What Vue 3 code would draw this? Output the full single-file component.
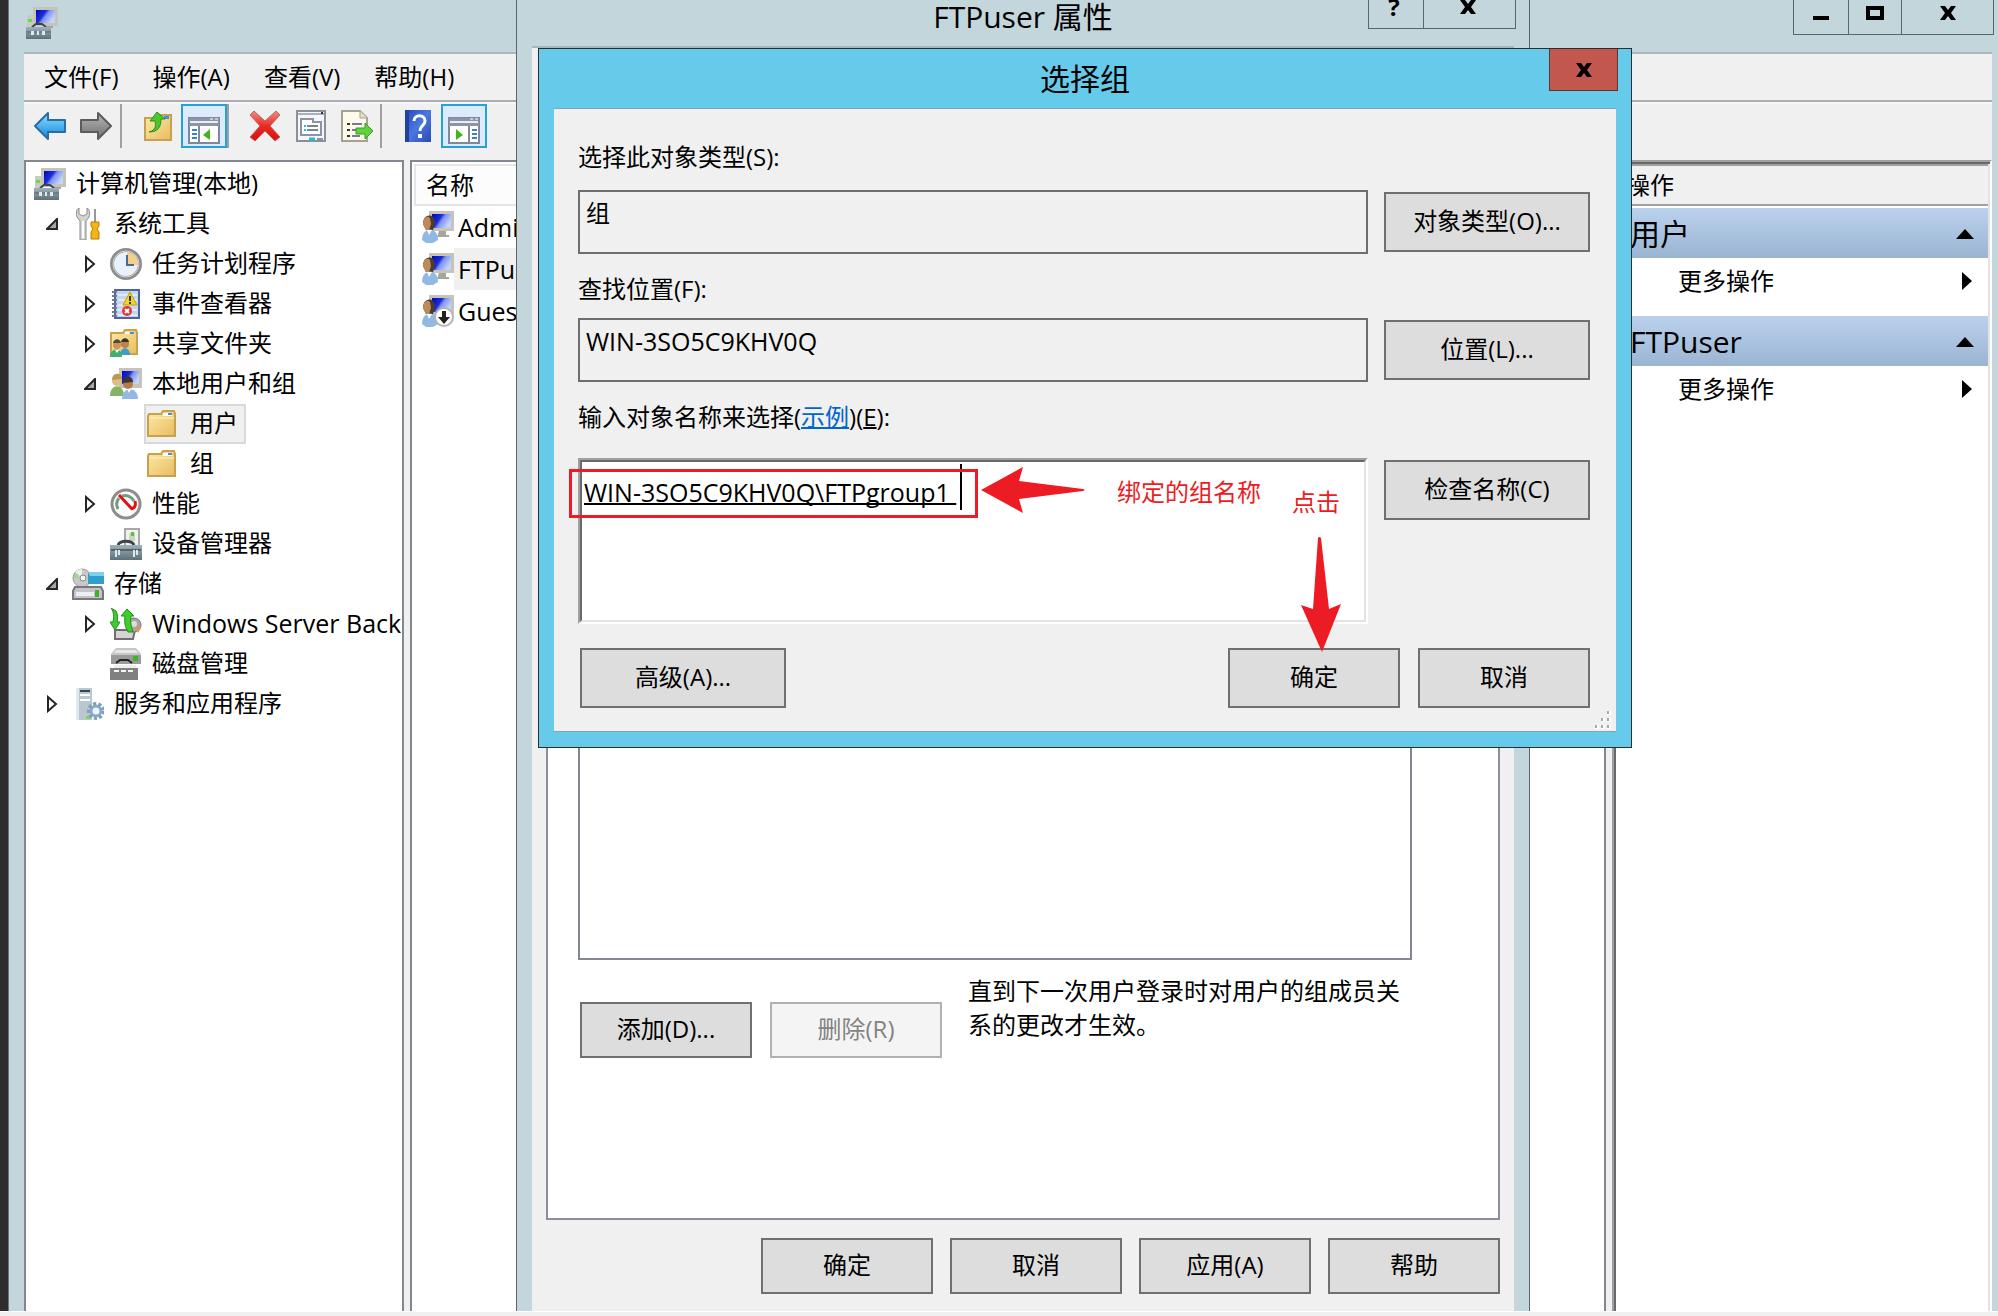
<script setup>
import { ref } from 'vue'

const menus = ['文件(F)', '操作(A)', '查看(V)', '帮助(H)']

const tree = [
  { level: 0, icon: 'computer', text: '计算机管理(本地)' },
  { level: 1, icon: 'tools', text: '系统工具', state: 'open' },
  { level: 2, icon: 'clock', text: '任务计划程序', state: 'closed' },
  { level: 2, icon: 'events', text: '事件查看器', state: 'closed' },
  { level: 2, icon: 'shared', text: '共享文件夹', state: 'closed' },
  { level: 2, icon: 'usersgroups', text: '本地用户和组', state: 'open' },
  { level: 3, icon: 'folder', text: '用户', selected: true },
  { level: 3, icon: 'folder', text: '组' },
  { level: 2, icon: 'gauge', text: '性能', state: 'closed' },
  { level: 2, icon: 'device', text: '设备管理器' },
  { level: 1, icon: 'storage', text: '存储', state: 'open' },
  { level: 2, icon: 'backup', text: 'Windows Server Back', state: 'closed', latin: true },
  { level: 2, icon: 'disk', text: '磁盘管理' },
  { level: 1, icon: 'services', text: '服务和应用程序', state: 'closed' },
]

const users = [
  { icon: 'user', name: 'Administrator' },
  { icon: 'user', name: 'FTPuser', selected: true },
  { icon: 'guest', name: 'Guest' },
]

const actionGroups = ['用户', 'FTPuser']
const objectType = ref('组')
const location = ref('WIN-3SO5C9KHV0Q')
const names = ref('WIN-3SO5C9KHV0Q\\FTPgroup1 ')
</script>

<template>
  <div class="page">
    <svg class="sprite" aria-hidden="true">
      <defs>
        <linearGradient id="gScreen" x1="0" y1="0" x2="1" y2="0.5">
          <stop offset="0" stop-color="#0009b8" /><stop offset="0.45" stop-color="#1c2cd4" /><stop offset="0.6" stop-color="#7f92f2" /><stop offset="1" stop-color="#c3d4fb" />
        </linearGradient>
        <linearGradient id="gFolder" x1="0" y1="0" x2="1" y2="1">
          <stop offset="0" stop-color="#fdeaa8" /><stop offset="1" stop-color="#e8bd60" />
        </linearGradient>
        <linearGradient id="gSlate" x1="0" y1="0" x2="0" y2="1">
          <stop offset="0" stop-color="#9fb0ba" /><stop offset="1" stop-color="#5d6f79" />
        </linearGradient>
        <linearGradient id="gBlue" x1="0" y1="0" x2="0" y2="1">
          <stop offset="0" stop-color="#8fe0ff" /><stop offset="1" stop-color="#0f86dc" />
        </linearGradient>
        <linearGradient id="gGray" x1="0" y1="0" x2="0" y2="1">
          <stop offset="0" stop-color="#b8b8b8" /><stop offset="1" stop-color="#6f6f6f" />
        </linearGradient>
        <linearGradient id="gRed" x1="0" y1="0" x2="0" y2="1">
          <stop offset="0" stop-color="#f48a80" /><stop offset="0.5" stop-color="#ea2b22" /><stop offset="1" stop-color="#e00b0b" />
        </linearGradient>
        <linearGradient id="gHelp" x1="0" y1="0" x2="1" y2="1">
          <stop offset="0" stop-color="#2a49b4" /><stop offset="0.5" stop-color="#4a78e0" /><stop offset="1" stop-color="#2a49b4" />
        </linearGradient>
      </defs>

      <symbol id="computer" viewBox="0 0 32 32">
        <rect x="1" y="8" width="8" height="14" fill="#c9cbc9" /><rect x="2" y="12" width="4" height="3" fill="#5fe03a" />
        <path d="M7 0h25v19H7z" fill="#c7c3b8" /><path d="M10 3h19v13H10z" fill="url(#gScreen)" />
        <path d="M18 19h9v2h-9z" fill="#a6a49c" />
        <path d="M6 20l4-3h6l4 3" fill="none" stroke="#3a464c" stroke-width="2" />
        <rect y="20" width="25" height="12" fill="url(#gSlate)" /><path d="M0 24h25v2H0z" fill="#6b7d87" />
        <path d="M5 24h3v4H5zM11 24h2v4h-2zM16 24h3v4h-3z" fill="#dfe8ec" />
      </symbol>
      <symbol id="tools" viewBox="-4 0 32 32">
        <path d="M3 0v6l4 2 4-2V0c3 1 3 6 2 9l-3 4v19H4V13L1 9C0 6 0 1 3 0z" fill="#d4d4d4" stroke="#8b8b8b" />
        <path d="M7 13v17" stroke="#fff" stroke-width="2" />
        <path d="M18 1h2v13h-2z" fill="#999" /><path d="M15 14h8v4l-2 3 2 3v7h-8v-7l2-3-2-3z" fill="#f3b414" stroke="#b87a0a" />
      </symbol>
      <symbol id="clock" viewBox="0 0 32 32">
        <circle cx="16" cy="16" r="14" fill="#e9f1fa" stroke="#8d8d8d" stroke-width="4" /><circle cx="16" cy="16" r="13" fill="none" stroke="#d6d6d6" stroke-width="1" />
        <path d="M17 17V4a12 12 0 0 1 11 13z" fill="#f5cf8d" /><path d="M17 7v10h7" fill="none" stroke="#4a6a90" stroke-width="2" />
      </symbol>
      <symbol id="events" viewBox="0 0 32 32">
        <path d="M5 2h24v28H5z" fill="#c5d5ee" stroke="#4d64a4" stroke-width="2" />
        <path d="M8 7h19M8 12h19M8 17h19M8 22h19M8 27h19" stroke="#fff" />
        <path d="M2 4h5M2 8h5M2 12h5M2 16h5M2 20h5M2 24h5M2 28h5" stroke="#747b88" stroke-width="2" />
        <path d="M20 4l7 13H13z" fill="#f2d51e" stroke="#c29c10" /><path d="M19 8h2v5h-2zM19 14h2v2h-2z" fill="#333" />
        <circle cx="17" cy="23" r="5" fill="#e23636" /><path d="M15 21l4 4M19 21l-4 4" stroke="#fff" stroke-width="2" />
      </symbol>
      <symbol id="folder" viewBox="0 0 32 32">
        <path d="M3 6h12l2-3h11l1 3v22H2V8z" fill="url(#gFolder)" stroke="#c9a04d" stroke-width="2" />
        <path d="M17 5h9v3h-9z" fill="#fff" /><path d="M22 5h4v2h-4z" fill="#3b93e0" />
        <path d="M4 10h24" stroke="#fff3c4" />
      </symbol>
      <symbol id="shared" viewBox="0 0 32 32">
        <path d="M1 5h12l2-3h11l1 3v21H1z" fill="url(#gFolder)" stroke="#c9a04d" stroke-width="2" /><path d="M15 4h4v2h-4z" fill="#fff" /><path d="M20 4h4v2h-4z" fill="#3b93e0" />
        <circle cx="7" cy="17" r="4" fill="#c99460" /><path d="M3 15c1-5 7-5 8 0z" fill="#5c4630" />
        <circle cx="15" cy="16" r="4" fill="#b9824f" /><path d="M11 14c1-5 7-5 8 0z" fill="#3a302a" />
        <path d="M10 27c0-9 10-9 10 0z" fill="#3f9dc8" /><path d="M0 29c0-10 12-10 12 0z" fill="#3fae72" />
        <path d="M5 22l2 3 2-3z" fill="#fff" />
      </symbol>
      <symbol id="usersgroups" viewBox="0 0 32 32">
        <path d="M9 0h23v20H9z" fill="#c7c3b8" /><path d="M12 3h17v13H12z" fill="url(#gScreen)" />
        <circle cx="7" cy="13" r="5" fill="#e0bd84" /><path d="M2 12c0-8 10-8 10-1z" fill="#b89b50" /><path d="M0 28c0-13 14-13 14 0z" fill="#84b464" />
        <circle cx="18" cy="16" r="5" fill="#b57c4b" /><path d="M13 15c0-9 10-8 10-1z" fill="#3f352f" />
        <path d="M12 31c0-13 16-13 16 0z" fill="#92b9e4" /><path d="M17 21l2 4 2-4z" fill="#fff" />
      </symbol>
      <symbol id="gauge" viewBox="0 0 32 32">
        <circle cx="16" cy="16" r="14" fill="#fbfbfb" stroke="#8d8d8d" stroke-width="3" />
        <path d="M8 21a10 10 0 0 1 1-11M12 8a10 10 0 0 1 12 5" fill="none" stroke="#6f9c86" stroke-width="3" />
        <path d="M9 7l13 14M25 13c1 4 0 7-4 8" fill="none" stroke="#e01414" stroke-width="3" />
      </symbol>
      <symbol id="device" viewBox="0 0 32 32">
        <path d="M15 1h14v17H15z" fill="#f2f2f2" stroke="#a8a8a8" stroke-width="2" /><path d="M19 5h6v8h-6z" fill="#c8d6c4" /><path d="M21 4h3v4h-3z" fill="#64bf2e" />
        <path d="M8 17c2-5 14-5 16 0" fill="none" stroke="#3a464c" stroke-width="3" />
        <path d="M0 17h32v15H0z" fill="url(#gSlate)" /><path d="M1 22h30" stroke="#52636c" stroke-width="2" />
        <path d="M6 22v7M9 22v5M24 22v7M27 22v5" stroke="#dfe8ec" stroke-width="2" />
      </symbol>
      <symbol id="storage" viewBox="0 0 32 32">
        <circle cx="10" cy="10" r="9" fill="#c9c9c9" stroke="#999" /><path d="M10 10L3 4a9 9 0 0 1 7-3z" fill="#efefef" /><circle cx="11" cy="10" r="3" fill="#f6f6f6" stroke="#888" /><path d="M2 6h4v4H2z" fill="#9ed884" />
        <path d="M16 4h16v12H16z" fill="#2f9fd0" /><path d="M16 4h16v4H18z" fill="#7fd0ee" />
        <path d="M3 19h26l2 4v8H1v-8z" fill="#c4c4ca" stroke="#77777c" stroke-width="2" /><path d="M4 24h18v4H4z" fill="#eeeef6" /><path d="M23 22h4v7h-4z" fill="#3db421" />
      </symbol>
      <symbol id="backup" viewBox="0 0 32 32">
        <path d="M5 22h20l-2 9H5z" fill="#d4d4d4" stroke="#6f6f6f" stroke-width="2" />
        <circle cx="24" cy="17" r="7" fill="#a6a6a6" stroke="#777" /><path d="M25 17l6 3-3 5z" fill="#e88d5c" /><circle cx="24" cy="16" r="3" fill="#ddd" />
        <path d="M1 0l5 3c2 4 2 8 1 11h3l-5 8-5-8h3C4 9 4 4 1 0z" fill="#3bcf2c" stroke="#2a8a22" />
        <path d="M17 1l7 7h-3c-1 6 0 10 2 16h-5c-3-5-4-10-3-16h-4z" fill="#3bcf2c" stroke="#2a8a22" />
      </symbol>
      <symbol id="disk" viewBox="0 0 32 32">
        <path d="M6 0h20l5 6v10H1V6z" fill="#c6c6c6" /><path d="M1 7h30v9H1z" fill="#9a9a9a" /><path d="M6 2h20l2 3H4z" fill="#e6e6e6" />
        <path d="M23 8h5v5h-5z" fill="#3db421" /><path d="M6 15l4-3h8l4 3" fill="none" stroke="#20242c" stroke-width="2" />
        <path d="M4 17h22v3H4z" fill="#eee" /><path d="M0 20h28v12H0z" fill="#808080" /><path d="M4 23h20" stroke="#f4f4f4" stroke-width="2" stroke-dasharray="5 2" />
      </symbol>
      <symbol id="services" viewBox="0 0 32 32">
        <path d="M4 0h16v32H4z" fill="#b9c8d0" /><path d="M4 0h3v32H4z" fill="#dfe9ee" /><path d="M8 2h10v2H8z" fill="#33454d" /><path d="M8 7h10M8 12h10" stroke="#fff" stroke-width="2" /><path d="M14 28h4v3h-4z" fill="#7cd84c" />
        <circle cx="24" cy="23" r="7" fill="none" stroke="#7f9dbd" stroke-width="4" stroke-dasharray="3 2" /><circle cx="24" cy="23" r="5" fill="#eef4fa" stroke="#89a8c8" stroke-width="3" />
      </symbol>
      <symbol id="user" viewBox="0 0 32 32">
        <path d="M7 0h25v20H7z" fill="#c7c3b8" /><path d="M10 3h19v14H10z" fill="url(#gScreen)" /><path d="M17 20h7v4h3v2H15z" fill="#a6a49c" />
        <path d="M1 13C1 2 13 2 13 12l-2 7H4z" fill="#4a3c30" /><path d="M1 13c0-7 5-9 7-6l1 6-2 6H4z" fill="#c08a56" />
        <path d="M0 29c0-14 16-14 16 0l-5 3H4z" fill="#92b9e4" /><path d="M5 19l2 5 3-5z" fill="#fff" />
      </symbol>
      <symbol id="guest" viewBox="0 0 32 32">
        <use href="#user" /><circle cx="22" cy="22" r="9" fill="#fff" stroke="#b4b4b4" stroke-width="2" />
        <path d="M20 16h4v6h4l-6 7-6-7h4z" fill="#222" />
      </symbol>

      <symbol id="back" viewBox="0 0 32 32">
        <path d="M1 16L14 3v7h17v12H14v7z" fill="url(#gBlue)" stroke="#2a6ca4" stroke-width="2" stroke-linejoin="round" />
      </symbol>
      <symbol id="forward" viewBox="0 0 32 32">
        <path d="M31 16L18 3v7H1v12h17v7z" fill="url(#gGray)" stroke="#5c5c5c" stroke-width="2" stroke-linejoin="round" />
      </symbol>
      <symbol id="up" viewBox="0 0 32 32">
        <path d="M3 8h12l2-3h12v25H3z" fill="url(#gFolder)" stroke="#c9a04d" stroke-width="2" /><path d="M22 6h5v3h-5z" fill="#3b93e0" />
        <path d="M7 22c7-2 7-6 6-11H8l7-9 8 7h-4c0 8-3 13-12 13z" fill="#4cc62c" stroke="#2c8f1c" />
      </symbol>
      <symbol id="treepane" viewBox="0 0 32 32">
        <path d="M1 6h30v25H1z" fill="#fff" stroke="#81889a" stroke-width="2" /><path d="M1 6h30v8H1z" fill="#8c94a8" /><path d="M2 10h28" stroke="#e9edf5" stroke-width="2" /><path d="M22 7h3M27 7h3" stroke="#fff" />
        <path d="M11 14v17" stroke="#81889a" stroke-width="2" /><path d="M4 18h5M4 22h5M4 26h5" stroke="#3480d2" stroke-width="2" /><path d="M22 17v11l-7-5z" fill="#41b51d" />
      </symbol>
      <symbol id="actionpane" viewBox="0 0 32 32">
        <path d="M1 6h30v25H1z" fill="#fff" stroke="#81889a" stroke-width="2" /><path d="M1 6h30v8H1z" fill="#8c94a8" /><path d="M2 10h28" stroke="#e9edf5" stroke-width="2" /><path d="M22 7h3M27 7h3" stroke="#fff" />
        <path d="M21 14v17" stroke="#81889a" stroke-width="2" /><path d="M24 18h5M24 22h5M24 26h5" stroke="#3480d2" stroke-width="2" /><path d="M8 17v11l7-5z" fill="#41b51d" />
      </symbol>
      <symbol id="delete" viewBox="0 0 32 32">
        <path d="M5 1l11 10L27 1l4 4-10 11 10 11-5 4-10-10L6 31l-5-4 10-11L1 5z" fill="url(#gRed)" stroke="#b46a66" stroke-linejoin="round" />
      </symbol>
      <symbol id="props" viewBox="0 0 32 32">
        <path d="M2 1h28v30H2z" fill="#f4f6fa" stroke="#8a8f9c" stroke-width="2" /><path d="M3 4h26" stroke="#a8b0c0" stroke-width="2" /><path d="M26 2h2v2h-2z" fill="#334" />
        <path d="M6 9h12v3h8v13H6z" fill="#fff" stroke="#8a93a8" stroke-width="2" /><path d="M12 16h11M12 20h11" stroke="#7b8290" stroke-width="2" /><path d="M9 16h2M9 20h2" stroke="#28b8e8" stroke-width="2" />
        <path d="M14 29h6" stroke="#28b8e8" stroke-width="3" /><path d="M22 29h6" stroke="#8a93a8" stroke-width="2" />
      </symbol>
      <symbol id="export" viewBox="0 0 32 32">
        <path d="M1 1h18l7 7v23H1z" fill="#fdfaea" stroke="#a6a293" stroke-width="2" /><path d="M19 1v7h7" fill="#e4e0d0" stroke="#a6a293" />
        <path d="M6 14h3M6 20h3M6 26h3" stroke="#333" stroke-width="2" /><path d="M11 14h10M11 20h6M11 26h8" stroke="#777a9a" stroke-width="2" />
        <path d="M15 18h9v-5l8 8-8 8v-5h-9z" fill="#5fd33a" stroke="#3a9a22" />
      </symbol>
      <symbol id="help" viewBox="0 0 32 32">
        <path d="M3 0h26v32H3z" fill="url(#gHelp)" /><path d="M3 0h4v32H3z" fill="#24409e" />
        <path d="M12 11c0-7 11-7 11 0 0 5-5 4-5 10" fill="none" stroke="#fff" stroke-width="3" /><path d="M16 24h4v4h-4z" fill="#fff" />
      </symbol>
      <symbol id="cross" viewBox="0 0 16 14">
        <path d="M0 0h5l3 4 3-4h5l-5 7 5 7h-5l-3-4-3 4H0l5-7z" fill="#000" />
      </symbol>
    </svg>

    <div class="desktop">
      <div class="edge"></div>

      <section class="main">
        <header class="titlebar">
          <svg class="icon"><use href="#computer" /></svg>
          <div class="winbuttons">
            <button class="min" aria-label="最小化"><i class="dash"></i></button>
            <button class="max" aria-label="最大化"><i class="square"></i></button>
            <button class="close" aria-label="关闭"><svg class="cross"><use href="#cross" /></svg></button>
          </div>
        </header>

        <div class="client">
          <nav class="menubar">
            <button v-for="m in menus" :key="m">{{ m }}</button>
          </nav>
          <div class="toolbar">
            <button class="tool" aria-label="后退"><svg class="icon"><use href="#back" /></svg></button>
            <button class="tool" aria-label="前进"><svg class="icon"><use href="#forward" /></svg></button>
            <i class="sep first"></i>
            <button class="tool" aria-label="向上"><svg class="icon"><use href="#up" /></svg></button>
            <button class="tool pressed" aria-label="控制台树"><svg class="icon"><use href="#treepane" /></svg></button>
            <i class="sep"></i>
            <button class="tool" aria-label="删除"><svg class="icon"><use href="#delete" /></svg></button>
            <button class="tool" aria-label="属性"><svg class="icon"><use href="#props" /></svg></button>
            <button class="tool" aria-label="导出列表"><svg class="icon"><use href="#export" /></svg></button>
            <i class="sep"></i>
            <button class="tool" aria-label="帮助"><svg class="icon"><use href="#help" /></svg></button>
            <button class="tool pressed" aria-label="操作窗格"><svg class="icon"><use href="#actionpane" /></svg></button>
          </div>

          <div class="panes">
            <ul class="tree">
              <li v-for="n in tree" :key="n.text" :class="['level' + n.level, { selected: n.selected }]">
                <button v-if="n.level === 1 || n.level === 2" class="twisty" :disabled="!n.state" aria-label="展开或折叠">
                  <svg v-if="n.state === 'open'" viewBox="0 0 12 12"><path d="M11 1v10H1z" fill="#a6a6a6" stroke="#262626" stroke-width="2" /></svg>
                  <svg v-else-if="n.state === 'closed'" class="tall" viewBox="0 0 12 18"><path d="M2 2v14l8-7z" fill="#fff" stroke="#262626" stroke-width="2" /></svg>
                </button>
                <span class="node">
                  <svg class="icon"><use :href="'#' + n.icon" /></svg>
                  <span :class="['nodetext', { latin: n.latin }]">{{ n.text }}</span>
                </span>
              </li>
            </ul>

            <div class="list">
              <table>
                <thead><tr><th>名称</th></tr></thead>
                <tbody>
                  <tr v-for="u in users" :key="u.name">
                    <td>
                      <span class="cell">
                        <svg class="icon"><use :href="'#' + u.icon" /></svg>
                        <span :class="['username', 'latin', { picked: u.selected }]">{{ u.name }}</span>
                      </span>
                    </td>
                  </tr>
                </tbody>
              </table>
            </div>

            <aside class="actions">
              <h2>操作</h2>
              <section v-for="g in actionGroups" :key="g">
                <h3><span>{{ g }}</span><i class="uparrow"></i></h3>
                <button class="more"><span>更多操作</span><i class="rightarrow"></i></button>
              </section>
            </aside>
          </div>
        </div>
      </section>

      <section class="properties">
        <header class="propstitle">
          <h1>FTPuser 属性</h1>
          <div class="winbuttons small">
            <button class="ask" aria-label="帮助">?</button>
            <button class="close" aria-label="关闭"><svg class="cross"><use href="#cross" /></svg></button>
          </div>
        </header>
        <div class="propsclient">
          <div class="tabpage">
            <div class="memberlist"></div>
            <div class="memberrow">
              <button class="btn short">添加(D)...</button>
              <button class="btn short" disabled>删除(R)</button>
              <p>直到下一次用户登录时对用户的组成员关系的更改才生效。</p>
            </div>
          </div>
          <footer class="propsfooter">
            <button class="btn short">确定</button>
            <button class="btn short">取消</button>
            <button class="btn short">应用(A)</button>
            <button class="btn short">帮助</button>
          </footer>
        </div>
      </section>

      <section class="picker">
        <header class="pickertitle">
          <h1>选择组</h1>
          <button class="redclose" aria-label="关闭"><svg class="cross"><use href="#cross" /></svg></button>
        </header>
        <form class="pickerclient" @submit.prevent>
          <label for="objtype">选择此对象类型(S):</label>
          <div class="row">
            <textarea id="objtype" v-model="objectType" class="readonly" readonly></textarea>
            <button type="button" class="btn wide">对象类型(O)...</button>
          </div>
          <label for="loc" class="second">查找位置(F):</label>
          <div class="row near">
            <textarea id="loc" v-model="location" class="readonly latin" readonly></textarea>
            <button type="button" class="btn wide">位置(L)...</button>
          </div>
          <label for="names" class="third">输入对象名称来选择(<a href="#">示例</a>)(<u>E</u>):</label>
          <div class="row far">
            <div class="sunken">
              <textarea id="names" v-model="names" class="latin" spellcheck="false"></textarea>
            </div>
            <button type="button" class="btn wide">检查名称(C)</button>
          </div>
          <div class="pickerfooter">
            <button type="button" class="btn wide">高级(A)...</button>
            <span class="spring"></span>
            <button class="btn tall">确定</button>
            <button type="button" class="btn tall">取消</button>
          </div>
        </form>
        <svg class="grip" viewBox="0 0 16 18" aria-hidden="true">
          <path d="M12 0h4v4h-4zM6 7h4v4H6zM12 7h4v4h-4zM0 14h4v4H0zM6 14h4v4H6zM12 14h4v4h-4z" fill="#fff" />
          <path d="M12 0h2v3h-2zM6 7h2v3H6zM12 7h2v3h-2zM0 14h2v3H0zM6 14h2v3H6zM12 14h2v3h-2z" fill="#a8a8a8" />
        </svg>

        <i class="caret"></i>
        <div class="frame"></div>
        <svg class="arrow-left" viewBox="0 0 104 46"><path d="M0 23L42 0l-4 14 64 8q3 1 0 2l-64 8 4 14z" fill="#ed1c24" /></svg>
        <span class="note bound">绑定的组名称</span>
        <span class="note click">点击</span>
        <svg class="arrow-down" viewBox="0 0 40 116"><path d="M21 115L0 68l12 4L17 1q1-2 3 0l8 71 12-5z" fill="#ed1c24" /></svg>
      </section>
    </div>
    <div class="bottomstrip"></div>
  </div>
</template>

<style>
html,
body {
  margin: 0;
  overflow: hidden;
}
</style>

<style scoped>
.page {
  display: flex;
  flex-direction: column;
  height: 100vh;
  font: 24px/32px "Open Sans", "Noto Sans CJK SC", sans-serif;
  color: #000;
}
.page * {
  box-sizing: border-box;
}
.sprite {
  position: absolute;
  width: 0;
  height: 0;
}
button,
textarea {
  font: inherit;
  color: inherit;
  border-radius: 0;
  margin: 0;
}
button {
  padding: 0;
  border: 0;
  background: none;
  white-space: nowrap;
}
h1,
h2,
h3,
p,
ul {
  margin: 0;
  padding: 0;
  font-weight: 400;
}
svg {
  display: block;
  flex: none;
}
.latin {
  font-size: 25px;
}
.icon {
  width: 32px;
  height: 32px;
}
.cross {
  width: 16px;
  height: 14px;
}
.desktop {
  position: relative;
  flex: 1;
  min-height: 0;
  display: flex;
  overflow: hidden;
}
.bottomstrip {
  height: 5px;
  border-top: 1px solid #fff;
  background: #f0f0f0;
}
.edge {
  width: 8px;
  background: #2d2d2d;
}

/* main window */
.main {
  flex: 1;
  min-width: 0;
  display: flex;
  flex-direction: column;
  padding: 0 6px 0 15px;
  border-left: 1px solid #69767b;
  background: #c3d6dc;
}
.titlebar {
  display: flex;
  justify-content: space-between;
  align-items: flex-start;
  height: 52px;
  margin-right: -2px;
}
.titlebar .icon {
  margin: 7px 0 0 2px;
}
.winbuttons {
  display: flex;
  height: 35px;
  border: 1px solid #5b666a;
  border-top: 0;
}
.winbuttons button {
  display: flex;
  align-items: center;
  justify-content: center;
}
.winbuttons button + button {
  border-left: 1px solid #5b666a;
}
.titlebar .winbuttons button {
  padding-bottom: 8px;
}
.min {
  width: 54px;
}
.max {
  width: 53px;
}
.close {
  width: 92px;
}
.dash {
  width: 16px;
  height: 4px;
  margin-top: 10px;
  background: #000;
}
.square {
  width: 18px;
  height: 14px;
  border: 4px solid #000;
}
.client {
  flex: 1;
  min-height: 0;
  display: flex;
  flex-direction: column;
  border-top: 2px solid #aab7bd;
  background: #f0f0f0;
}
.menubar {
  display: flex;
  gap: 34px;
  height: 48px;
  padding-left: 20px;
  border-bottom: 2px solid #adadb1;
}
.toolbar {
  display: flex;
  align-items: center;
  height: 58px;
  padding: 0 10px 12px;
  border-top: 2px solid #f5f6fa;
}
.tool {
  display: flex;
  align-items: center;
  justify-content: center;
  width: 46px;
  height: 44px;
}
.tool:first-child,
.tool:nth-child(2) {
  justify-content: flex-start;
}
.tool.pressed {
  padding-top: 4px;
  border: 2px solid #26a0da;
  background: #dcebfc;
}
.sep {
  width: 2px;
  height: 44px;
  margin-right: 13px;
  background: #a0a0a0;
}
.sep.first {
  margin-left: -6px;
}
.panes {
  flex: 1;
  min-height: 0;
  display: flex;
}
.tree {
  width: 380px;
  padding-top: 2px;
  overflow: hidden;
  list-style: none;
  border: 2px solid #828790;
  border-bottom: 0;
  background: #fff;
}
.tree li {
  display: flex;
  align-items: center;
  height: 40px;
  padding-left: 8px;
  white-space: nowrap;
}
.tree .level1 {
  padding-left: 14px;
}
.tree .level2 {
  padding-left: 52px;
}
.tree .level3 {
  padding-left: 118px;
}
.twisty {
  flex: none;
  width: 32px;
  height: 32px;
  display: flex;
  align-items: center;
  padding-left: 6px;
}
.twisty svg {
  width: 12px;
  height: 12px;
}
.twisty svg.tall {
  height: 18px;
}
.node {
  display: flex;
  align-items: center;
  gap: 10px;
}
.selected .node {
  height: 40px;
  padding-right: 8px;
  outline: 2px solid #d9d9d9;
  outline-offset: -2px;
  background: #f0f0f0;
}
.level3 .node {
  padding-left: 2px;
  gap: 12px;
}
.nodetext {
  padding-bottom: 2px;
}
.list {
  flex: 1;
  min-width: 0;
  margin: 0 6px;
  border: 2px solid #828790;
  border-bottom: 0;
  background: #fff;
}
.list table {
  width: 100%;
  padding: 2px;
  border-spacing: 0;
}
.list th {
  height: 42px;
  padding: 0 10px;
  font-weight: 400;
  text-align: left;
  border: 2px solid #e5e5e5;
  background: #fcfcfc;
}
.list td {
  padding: 0 8px;
}
.cell {
  display: flex;
  align-items: center;
  height: 42px;
}
.username {
  flex: 1;
  padding-left: 4px;
  line-height: 42px;
}
.picked {
  background: #f0f0f0;
}
.actions {
  width: 380px;
  border-left: 2px solid #a0a0a0;
  border-top: 2px solid #a0a0a0;
  border-right: 2px solid #fff;
  box-shadow: inset 2px 2px #696969, inset -2px 0 #e3e3e3;
  padding: 2px 2px 0;
  background: #fff;
}
.actions h2 {
  height: 42px;
  padding-left: 10px;
  font-size: 24px;
  line-height: 38px;
  border-top: 2px solid #a0a0a0;
  border-bottom: 2px solid #a0a0a0;
  background: #f0f0f0;
}
.actions section {
  height: 108px;
  padding-top: 2px;
}
.actions h3 {
  display: flex;
  align-items: center;
  justify-content: space-between;
  height: 50px;
  padding: 2px 14px 0;
  font-size: 30px;
  background: linear-gradient(#bbd2ed, #9ab4d2);
}
.uparrow {
  border: 9px solid transparent;
  border-top: 0;
  border-bottom: 10px solid #000;
}
.more {
  display: flex;
  align-items: center;
  justify-content: space-between;
  width: 100%;
  height: 46px;
  padding: 0 16px 0 62px;
}
.rightarrow {
  border: 9px solid transparent;
  border-right: 0;
  border-left: 10px solid #000;
}

/* shared dialog buttons */
.btn {
  height: 56px;
  padding-bottom: 2px;
  border: 2px solid #707070;
  background: #ddd;
}
.btn.short {
  width: 172px;
}
.btn.tall {
  width: 172px;
  height: 60px;
}
.btn.wide {
  width: 206px;
  height: 60px;
}
.btn:disabled {
  color: #838383;
  border-color: #adb2b5;
  background: #f4f4f4;
}

/* properties dialog */
.properties {
  position: absolute;
  top: 0;
  bottom: 0;
  left: 516px;
  width: 1014px;
  display: flex;
  flex-direction: column;
  padding: 0 15px;
  border: 1px solid #5b666a;
  border-width: 0 1px;
  background: #c3d6dc;
}
.propstitle {
  position: relative;
  height: 46px;
}
.propstitle h1 {
  font-size: 30px;
  line-height: 34px;
  text-align: center;
}
.small {
  position: absolute;
  top: 0;
  right: -2px;
  height: 29px;
}
.small button {
  padding: 0 4px 14px 0;
}
.ask {
  width: 54px;
  font-size: 24px;
  font-weight: 700;
}
.propsclient {
  flex: 1;
  display: flex;
  flex-direction: column;
  padding: 0 14px 17px;
  border-top: 2px solid #a9b7bd;
  background: #f0f0f0;
}
.tabpage {
  flex: 1;
  display: flex;
  flex-direction: column;
  padding: 0 30px 160px;
  border: 2px solid #8a8f9a;
  background: #fff;
}
.memberlist {
  flex: 1;
  margin-right: 56px;
  border: 2px solid #828790;
}
.memberrow {
  display: flex;
  align-items: flex-start;
  gap: 18px;
  padding: 14px 0 0 2px;
}
.memberrow .btn {
  margin-top: 28px;
}
.memberrow p {
  width: 444px;
  padding-left: 8px;
  line-height: 34px;
}
.propsfooter {
  display: flex;
  justify-content: flex-end;
  gap: 17px;
  padding-top: 18px;
}

/* group picker dialog */
.picker {
  position: absolute;
  top: 48px;
  left: 538px;
  width: 1094px;
  padding: 0 15px 15px;
  border: 1px solid #2d2d2d;
  background: #66caea;
}
.pickertitle {
  position: relative;
  height: 59px;
}
.pickertitle h1 {
  font-size: 30px;
  line-height: 60px;
  text-align: center;
}
.redclose {
  position: absolute;
  top: 0;
  right: -2px;
  display: flex;
  align-items: center;
  justify-content: center;
  width: 69px;
  height: 42px;
  border: 1px solid #5f3533;
  border-top: 0;
  background: #c1574d;
}
.pickerclient {
  display: flex;
  flex-direction: column;
  padding: 32px 26px 23px 24px;
  border-top: 1px solid #7fa6bb;
  border-bottom: 1px solid #7fa6bb;
  background: #f0f0f0;
}
.pickerclient a {
  color: #0066cc;
  text-decoration-thickness: 2px;
}
.pickerclient u {
  text-decoration-thickness: 2px;
}
.second {
  margin-top: 19px;
}
.third {
  margin-top: 19px;
}
.row {
  display: flex;
  gap: 16px;
  margin-top: 17px;
}
.row .btn {
  margin-top: 2px;
}
.row.near {
  margin-top: 13px;
}
.row.far {
  margin-top: 25px;
}
textarea {
  flex: 1;
  min-width: 0;
  resize: none;
  outline: 0;
  overflow: hidden;
}
.latin {
  font-size: 25px;
}
.readonly {
  height: 64px;
  padding: 5px 6px;
  border: 2px solid #6e6e6e;
  background: #f0f0f0;
}
.sunken {
  flex: 1;
  display: flex;
  height: 166px;
  border: 2px solid #a0a0a0;
  border-right-color: #fff;
  border-bottom-color: #fff;
}
.sunken textarea {
  padding: 14px 2px;
  border: 2px solid #696969;
  border-right-color: #e3e3e3;
  border-bottom-color: #e3e3e3;
  background: #fff;
  text-decoration: underline;
  text-decoration-thickness: 2px;
  text-decoration-skip-ink: none;
}
.pickerfooter {
  display: flex;
  gap: 18px;
  margin-top: 24px;
  padding-left: 2px;
}
.spring {
  flex: 1;
}
.grip {
  position: absolute;
  right: 20px;
  bottom: 18px;
  width: 16px;
  height: 18px;
}

/* callouts drawn over the picker */
.caret {
  position: absolute;
  left: 421px;
  top: 415px;
  width: 2px;
  height: 46px;
  background: #000;
}
.frame {
  position: absolute;
  left: 30px;
  top: 420px;
  width: 409px;
  height: 49px;
  border: 3px solid #ed1c24;
}
.arrow-left {
  position: absolute;
  left: 442px;
  top: 418px;
  width: 104px;
  height: 46px;
}
.arrow-down {
  position: absolute;
  left: 762px;
  top: 488px;
  width: 40px;
  height: 116px;
}
.note {
  position: absolute;
  color: #ed1c24;
}
.bound {
  left: 578px;
  top: 427px;
}
.click {
  left: 753px;
  top: 437px;
}
</style>
